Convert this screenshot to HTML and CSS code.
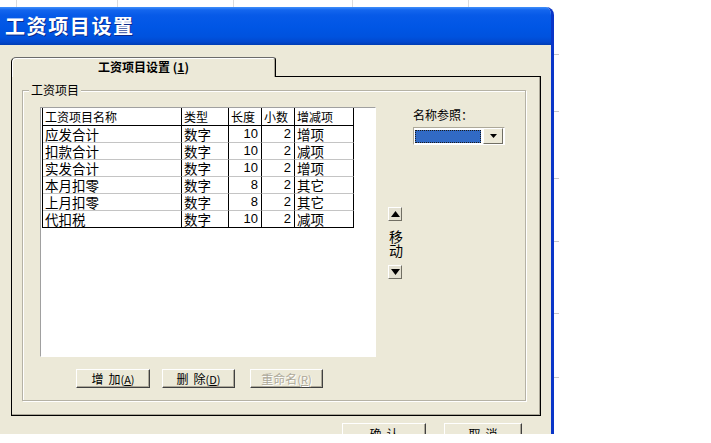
FILE: index.html
```html
<!DOCTYPE html>
<html lang="zh">
<head>
<meta charset="utf-8">
<title>工资项目设置</title>
<link rel="stylesheet" href="styles.css">
</head>
<body>
<div class="screen">
  <div class="topstrip"><span></span><span></span><span></span><span></span><span></span></div>
  <div class="window">
    <div class="titlebar"><span class="title">工资项目设置</span></div>
    <div class="client">
      <div class="tabs">
        <div class="tabstrip">
          <div class="tab">工资项目设置 (<u>1</u>)</div>
          <div class="tabrest"></div>
        </div>
        <div class="panel">
          <div class="groupbox">
            <span class="gb-label">工资项目</span>
            <div class="gb-main">
              <div class="listbox">
                <div class="grid">
                  <div class="hd">工资项目名称</div><div class="hd">类型</div><div class="hd">长度</div><div class="hd">小数</div><div class="hd">增减项</div>
                  <div class="c">应发合计</div><div class="c">数字</div><div class="c n">10</div><div class="c n">2</div><div class="c">增项</div>
                  <div class="c">扣款合计</div><div class="c">数字</div><div class="c n">10</div><div class="c n">2</div><div class="c">减项</div>
                  <div class="c">实发合计</div><div class="c">数字</div><div class="c n">10</div><div class="c n">2</div><div class="c">增项</div>
                  <div class="c">本月扣零</div><div class="c">数字</div><div class="c n">8</div><div class="c n">2</div><div class="c">其它</div>
                  <div class="c">上月扣零</div><div class="c">数字</div><div class="c n">8</div><div class="c n">2</div><div class="c">其它</div>
                  <div class="c">代扣税</div><div class="c">数字</div><div class="c n">10</div><div class="c n">2</div><div class="c">减项</div>
                </div>
              </div>
              <div class="movecol">
                <button class="mini"><svg width="9" height="6" viewBox="0 0 9 6"><polygon points="4.5,0 9,6 0,6" fill="#000"/></svg></button>
                <div class="movetext"><span>移</span><span>动</span></div>
                <button class="mini"><svg width="9" height="6" viewBox="0 0 9 6"><polygon points="0,0 9,0 4.5,6" fill="#000"/></svg></button>
              </div>
              <div class="refcol">
                <div class="reflabel">名称参照：</div>
                <div class="combo">
                  <div class="combo-field"></div>
                  <div class="combo-btn"><svg width="7" height="4" viewBox="0 0 7 4"><polygon points="0,0 7,0 3.5,4" fill="#000"/></svg></div>
                </div>
              </div>
            </div>
            <div class="btnrow">
              <button class="btn b-add"><span class="sp">增</span>加<span class="acc">(<u>A</u>)</span></button>
              <button class="btn b-del"><span class="sp">删</span>除<span class="acc">(<u>D</u>)</span></button>
              <button class="btn b-ren disabled">重命名<span class="acc">(<u>R</u>)</span></button>
            </div>
          </div>
        </div>
      </div>
      <div class="dlgbtns">
        <button class="btn ok"><span class="sp">确</span>认</button>
        <button class="btn cancel"><span class="sp">取</span>消</button>
      </div>
    </div>
  </div>
  <div class="sidestrip"><span></span><span></span><span></span><span></span><span></span><span></span></div>
</div>
</body>
</html>
```
FILE: styles.css
```css
* { box-sizing: border-box; }
html, body { margin: 0; padding: 0; }
body {
  background: #fff;
  font-family: "Noto Sans CJK SC", "Liberation Sans", sans-serif;
  font-size: 12px;
  color: #000;
  width: 711px;
  height: 443px;
  overflow: hidden;
}
.screen {
  display: grid;
  grid-template-columns: 554px 1fr;
  grid-template-rows: 7px 427px 1fr;
  height: 443px;
}
.topstrip { grid-column: 1 / -1; display: flex; }
.topstrip span { flex: none; height: 7px; border-right: 1px solid #dcdcdc; }
.topstrip span:nth-child(1) { width: 17px; }
.topstrip span:nth-child(2) { width: 101px; }
.topstrip span:nth-child(3) { width: 116px; }
.topstrip span:nth-child(4) { width: 119px; }
.topstrip span:nth-child(5) { width: 116px; }

.sidestrip { grid-column: 2; grid-row: 2 / 4; display: flex; flex-direction: column; }
.sidestrip span { flex: none; width: 5px; border-bottom: 1px solid #c8c8c8; }
.sidestrip span:nth-child(1) { height: 48px; }
.sidestrip span:nth-child(2) { height: 57px; }
.sidestrip span:nth-child(3) { height: 67px; }
.sidestrip span:nth-child(4) { height: 63px; }
.sidestrip span:nth-child(5) { height: 72px; }
.sidestrip span:nth-child(6) { height: 64px; }

.window {
  grid-column: 1;
  grid-row: 2;
  display: flex;
  flex-direction: column;
  background: #ECE9D8;
  border-right: 3px solid #0A35C8;
  border-top-right-radius: 8px;
  overflow: hidden;
}
.titlebar {
  flex: none;
  height: 38px;
  padding-left: 5px;
  display: flex;
  align-items: center;
  background: linear-gradient(#4090FA 0px, #1466EE 3px, #075AE8 8px, #0056E5 20px, #0052DE 30px, #0248CE 35px, #003DB3 38px);
}
.title {
  color: #fff;
  font-weight: bold;
  font-size: 20px;
  letter-spacing: 1.6px;
  line-height: 24px;
  text-shadow: 1px 1px 0 #0A2A8C;
}
.client { flex: 1; padding: 12px 0 0 11px; }

.tabs { width: 530px; }
.tabstrip { display: flex; height: 20px; }
.tab {
  width: 265px;
  border: 1px solid #000;
  border-top-color: #6b6b6b;
  border-bottom: 0;
  border-radius: 5px 3px 0 0;
  box-shadow: inset 1px 1px 0 #fff, inset -1px 0 0 #aca899;
  text-align: center;
  font-weight: bold;
  line-height: 18px;
}
.tabrest { flex: 1; border-bottom: 1px solid #000; }
.panel {
  height: 339px;
  border: 1px solid #000;
  border-top: 0;
  box-shadow: inset -1px -1px 0 #aca899;
  padding: 13px 0 0 10px;
}
.groupbox {
  position: relative;
  width: 504px;
  height: 311px;
  border: 1px solid #b5b2a5;
  box-shadow: inset 1px 1px 0 #fff, 1px 1px 0 #fff;
  padding: 16px 0 0 17px;
}
.gb-label {
  position: absolute;
  left: 6px;
  top: -8px;
  padding: 0 2px;
  background: #ECE9D8;
  line-height: 14px;
}
.gb-main { display: flex; height: 250px; }
.listbox {
  flex: none;
  width: 336px;
  height: 250px;
  border: 1px solid;
  border-color: #a0a0a0 #fff #fff #a0a0a0;
  background: #fff;
  padding-left: 1px;
}
.grid {
  display: inline-grid;
  grid-template-columns: 139px 47px 33px 33px 59px;
  grid-template-rows: 18px repeat(6, 17px);
  border-left: 1px solid #000;
}
.grid > div {
  border-right: 1px solid #000;
  border-bottom: 1px solid #c4c4c4;
  padding-left: 2px;
  white-space: nowrap;
}
.grid > .hd { border-bottom-color: #000; font-size: 12px; line-height: 17px; }
.grid > .c { font-size: 13.5px; line-height: 16px; }
.grid > .n {
  text-align: right;
  padding: 0 3px 0 0;
  font-family: "Liberation Sans", sans-serif;
  font-size: 13px;
}
.grid > div:nth-last-child(-n+5) { border-bottom-color: #000; }

.movecol {
  flex: none;
  margin-left: 12px;
  width: 16px;
  padding-top: 100px;
  display: flex;
  flex-direction: column;
}
.mini {
  width: 14px;
  height: 14px;
  padding: 0;
  margin: 0;
  border: 1px solid;
  border-color: #fff #716f64 #716f64 #fff;
  background: #E4E1D2;
  display: flex;
  align-items: center;
  justify-content: center;
}
.movetext {
  margin: 8px 0 8px 1px;
  display: flex;
  flex-direction: column;
  font-size: 14px;
  line-height: 14px;
}
.refcol { flex: none; margin-left: 9px; padding-top: 1px; }
.reflabel { line-height: 14px; }
.combo {
  margin-top: 5px;
  width: 92px;
  height: 18px;
  border: 1px solid;
  border-color: #aca899 #fff #fff #aca899;
  background: #fff;
  display: flex;
}
.combo-field {
  width: 66px;
  height: 13px;
  margin: 2px 2px 0 1px;
  background: #316AC5;
  border: 1px dotted #1a1a1a;
}
.combo-btn {
  width: 20px;
  height: 16px;
  border: 1px solid;
  border-color: #fff #716f64 #716f64 #fff;
  background: #ECE9D8;
  display: flex;
  align-items: center;
  justify-content: center;
}
.btnrow { display: flex; margin-top: 12px; padding-left: 36px; }
.btn {
  height: 19px;
  padding: 0;
  margin: 0;
  border: 1px solid;
  border-color: #fff #404040 #404040 #fff;
  box-shadow: inset -1px -1px 0 #aca899;
  background: #ECE9D8;
  font-family: "Noto Sans CJK SC", "Liberation Sans", sans-serif;
  font-size: 12px;
  line-height: 16px;
  color: #000;
}
.sp { margin-right: 5px; }
.acc { font-size: 11px; }
.b-add { width: 74px; margin-right: 12px; }
.b-del { width: 73px; margin-right: 15px; }
.b-ren { width: 73px; }
.disabled { color: #aca899; text-shadow: 1px 1px 0 #fff; }
.dlgbtns { display: flex; margin-top: 7px; padding-left: 331px; }
.dlgbtns .btn { height: 22px; line-height: 20px; }
.ok { width: 84px; }
.cancel { width: 78px; margin-left: 18px; }
```
